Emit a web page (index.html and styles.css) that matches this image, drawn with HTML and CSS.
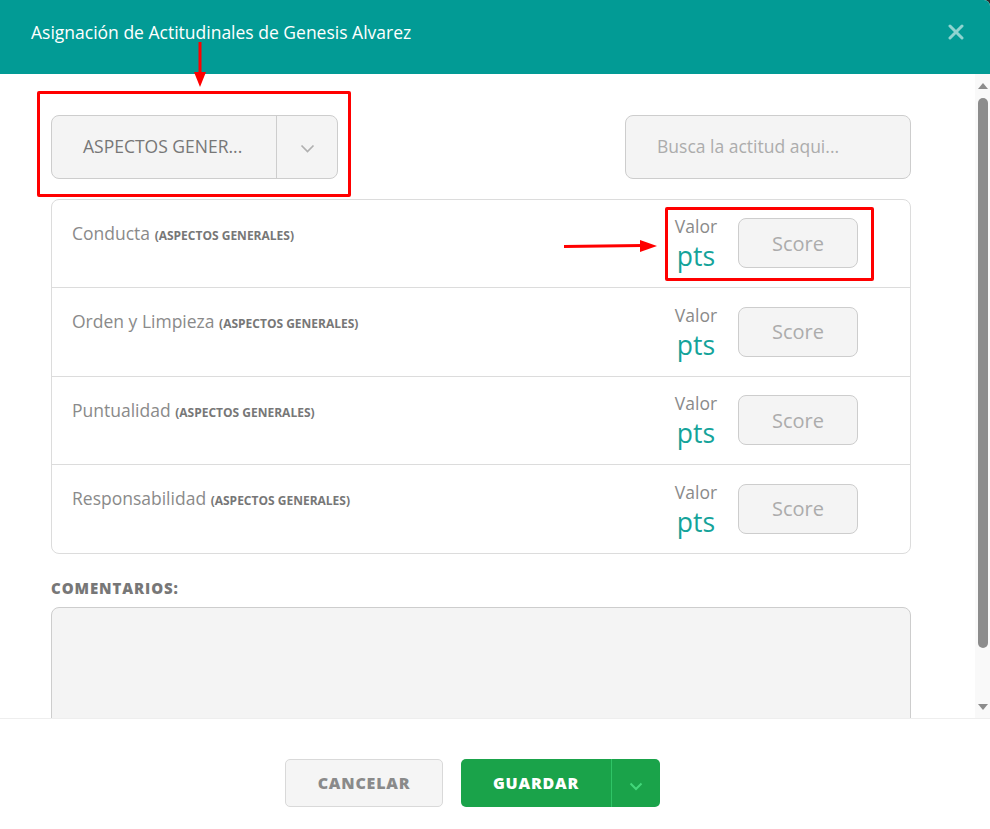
FILE: index.html
```html
<!DOCTYPE html>
<html>
<head>
<meta name="viewport" content="width=device-width, initial-scale=1">
<link rel="stylesheet" href="styles.css">
</head>
<body>

<div class="modal">
    <div class="modal-header">
        <h2 class="modal-title">Asignación de Actitudinales de Genesis Alvarez</h2>
        <button class="close" type="button">
            <svg width="16" height="16" viewBox="0 0 16 16"><path d="M2 2 L14 14 M14 2 L2 14" stroke="currentColor" stroke-width="3" stroke-linecap="round"/></svg>
        </button>
    </div>

    <div class="modal-main">
        <div class="modal-body">
            <div class="toolbar">
                <div class="select">
                    <span class="select-text">ASPECTOS GENER...</span>
                    <span class="select-caret">
                        <svg width="15" height="9" viewBox="0 0 15 9"><path d="M1.5 1.5 L7.5 7.5 L13.5 1.5" fill="none" stroke="#b0b0b0" stroke-width="1.7"/></svg>
                    </span>
                </div>
                <input class="search" type="text" placeholder="Busca la actitud aqui...">
            </div>

            <div class="list">
                <div class="row">
                    <div class="name">Conducta <b>(ASPECTOS GENERALES)</b></div>
                    <div class="value"><span class="value-label">Valor</span><span class="pts">pts</span></div>
                    <input class="score" type="text" placeholder="Score">
                </div>
                <div class="row">
                    <div class="name">Orden y Limpieza <b>(ASPECTOS GENERALES)</b></div>
                    <div class="value"><span class="value-label">Valor</span><span class="pts">pts</span></div>
                    <input class="score" type="text" placeholder="Score">
                </div>
                <div class="row">
                    <div class="name">Puntualidad <b>(ASPECTOS GENERALES)</b></div>
                    <div class="value"><span class="value-label">Valor</span><span class="pts">pts</span></div>
                    <input class="score" type="text" placeholder="Score">
                </div>
                <div class="row">
                    <div class="name">Responsabilidad <b>(ASPECTOS GENERALES)</b></div>
                    <div class="value"><span class="value-label">Valor</span><span class="pts">pts</span></div>
                    <input class="score" type="text" placeholder="Score">
                </div>
            </div>

            <label class="comments-label">COMENTARIOS:</label>
            <textarea class="comments"></textarea>
        </div>

        <div class="scrollbar">
            <span class="scroll-up"></span>
            <span class="scroll-thumb"></span>
            <span class="scroll-down"></span>
        </div>
    </div>

    <div class="modal-footer">
        <button class="btn btn-cancel" type="button">CANCELAR</button>
        <div class="btn-group">
            <button class="btn btn-save" type="button">GUARDAR</button>
            <button class="btn btn-save-caret" type="button">
                <svg width="14" height="9" viewBox="0 0 14 9"><path d="M1.5 1.5 L7 7 L12.5 1.5" fill="none" stroke="#43d77a" stroke-width="2"/></svg>
            </button>
        </div>
    </div>

    <!-- annotations -->
    <div class="mark mark-select"></div>
    <div class="mark mark-score"></div>
    <svg class="arrow arrow-down" width="14" height="46" viewBox="0 0 14 46"><path d="M7 0 V32" stroke="#f00" stroke-width="3"/><path d="M1 30 L13 30 L7 45 Z" fill="#f00"/></svg>
    <svg class="arrow arrow-right" width="94" height="14" viewBox="0 0 94 14"><path d="M0 7.5 L78 6.5" stroke="#f00" stroke-width="3"/><path d="M76 1 L93 7 L76 13 Z" fill="#f00"/></svg>
</div>

</body>
</html>
```

FILE: styles.css
```css
/* Page */
body {
  margin: 0;
  background: #2b2b2b;
  font-family: "Open Sans", "Liberation Sans", sans-serif;
}

.modal {
  position: relative;
  width: 990px;
  height: 829px;
  background: #fff;
  border-top-right-radius: 6px;
  display: flex;
  flex-direction: column;
  overflow: hidden;
}

/* Header */
.modal-header {
  height: 74px;
  flex: none;
  box-sizing: border-box;
  background: #029b95;
  display: flex;
  justify-content: space-between;
  align-items: flex-start;
  padding: 19px 26px 0 31px;
}

.modal-title {
  margin: 0;
  color: #fff;
  font-size: 17.5px;
  font-weight: 400;
  line-height: 26px;
}

.close {
  border: 0;
  background: none;
  padding: 0;
  margin-top: 5px;
  color: #8fd4d0;
  line-height: 0;
}

/* Body + fake scrollbar */
.modal-main {
  flex: 1;
  min-height: 0;
  display: flex;
}

.modal-body {
  flex: 1;
  overflow: hidden;
  padding: 41px 64px 0 51px;
}

.scrollbar {
  width: 15px;
  flex: none;
  background: #f9f9f9;
  display: flex;
  flex-direction: column;
  align-items: center;
  padding: 9px 0 8px;
  box-sizing: border-box;
}

.scroll-up {
  width: 0;
  height: 0;
  border-left: 5px solid transparent;
  border-right: 5px solid transparent;
  border-bottom: 6px solid #8c8c8c;
}

.scroll-thumb {
  width: 10px;
  height: 550px;
  margin-top: 9px;
  background: #8c8c8c;
  border-radius: 5px;
}

.scroll-down {
  width: 0;
  height: 0;
  margin-top: auto;
  border-left: 5px solid transparent;
  border-right: 5px solid transparent;
  border-top: 6px solid #8c8c8c;
}

.toolbar {
  display: flex;
  justify-content: space-between;
  height: 64px;
}

.select {
  width: 287px;
  box-sizing: border-box;
  display: flex;
  background: #f4f4f4;
  border: 1px solid #cdcdcd;
  border-radius: 8px;
}

.select-text {
  flex: 1;
  display: flex;
  align-items: center;
  padding-left: 31px;
  padding-bottom: 2px;
  font-size: 17.5px;
  color: #777;
  border-right: 1px solid #cdcdcd;
}

.select-caret {
  width: 60px;
  display: flex;
  align-items: center;
  justify-content: center;
  padding-top: 2px;
}

.search {
  width: 286px;
  box-sizing: border-box;
  background: #f4f4f4;
  border: 1px solid #cdcdcd;
  border-radius: 8px;
  padding: 0 0 2px 31px;
  font-family: inherit;
  font-size: 17.5px;
  color: #777;
  outline: none;
}

.search::placeholder,
.score::placeholder {
  color: #acacac;
}

/* Attitudes list */
.list {
  margin-top: 20px;
  border: 1px solid #dcdcdc;
  border-radius: 8px;
}

.row {
  height: 87px;
  display: flex;
  align-items: center;
  padding: 0 52px 0 20px;
  border-bottom: 1px solid #dcdcdc;
}

.row:nth-child(even) {
  height: 88px;
}

.row:last-child {
  border-bottom: 0;
}

.name {
  flex: 1;
  align-self: flex-start;
  padding-top: 21px;
  font-size: 17.5px;
  line-height: 24px;
  color: #8a8a8a;
}

.name b {
  font-size: 12px;
  font-weight: 700;
  color: #777;
}

.value {
  width: 52px;
  display: flex;
  flex-direction: column;
  align-items: center;
  margin-right: 16px;
  margin-top: 1px;
}

.value-label {
  font-size: 17.5px;
  line-height: 24px;
  color: #8a8a8a;
}

.pts {
  font-size: 26.5px;
  line-height: 36px;
  color: #14a39a;
}

.score {
  width: 120px;
  height: 50px;
  box-sizing: border-box;
  background: #f4f4f4;
  border: 1px solid #cdcdcd;
  border-radius: 8px;
  text-align: center;
  font-family: inherit;
  font-size: 20px;
  color: #777;
  outline: none;
  margin-top: -1px;
}

/* Comments */
.comments-label {
  display: block;
  margin-top: 24px;
  font-size: 15px;
  font-weight: 800;
  letter-spacing: 0.9px;
  color: #777;
  line-height: 20px;
}

.comments {
  display: block;
  width: 100%;
  height: 150px;
  box-sizing: border-box;
  margin-top: 9px;
  background: #f4f4f4;
  border: 1px solid #cdcdcd;
  border-radius: 8px;
  resize: none;
}

/* Footer */
.modal-footer {
  height: 111px;
  flex: none;
  box-sizing: border-box;
  border-top: 1px solid #eee;
  display: flex;
  justify-content: center;
  align-items: flex-start;
  gap: 18px;
  padding: 40px 45px 0 0;
}

.btn {
  height: 48px;
  border-radius: 5px;
  font-family: inherit;
  font-size: 16px;
  font-weight: 800;
  letter-spacing: 0.8px;
}

.btn-cancel {
  width: 158px;
  background: #f5f5f5;
  border: 1px solid #d9d9d9;
  color: #8a8a8a;
}

.btn-group {
  display: flex;
  background: #1aa34a;
  border-radius: 5px;
}

.btn-save {
  width: 151px;
  background: none;
  border: 0;
  border-right: 1px solid #2fc466;
  border-radius: 0;
  color: #fff;
}

.btn-save-caret {
  width: 48px;
  background: none;
  border: 0;
  padding-top: 4px;
}

/* Red annotations */
.mark {
  position: absolute;
  border: 3px solid #f00;
  border-radius: 2px;
}

.mark-select {
  left: 37px;
  top: 91px;
  width: 308px;
  height: 100px;
}

.mark-score {
  left: 665px;
  top: 207px;
  width: 203px;
  height: 68px;
}

.arrow {
  position: absolute;
}

.arrow-down {
  left: 193px;
  top: 42px;
}

.arrow-right {
  left: 564px;
  top: 239px;
}
```
